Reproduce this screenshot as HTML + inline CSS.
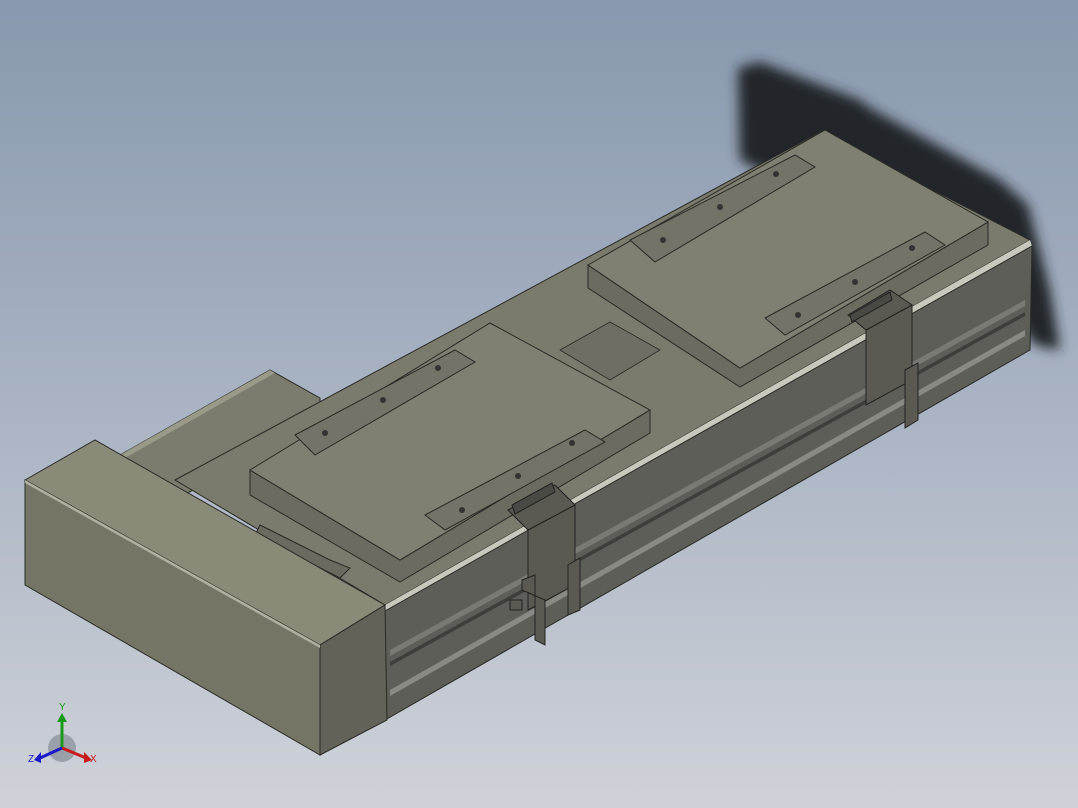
<!DOCTYPE html>
<html><head><meta charset="utf-8"><style>
html,body{margin:0;padding:0;width:1078px;height:808px;overflow:hidden}
body{background:linear-gradient(180deg,#8898ae 0%,#a9b3c3 50%,#cfd2d8 100%)}
svg{position:absolute;left:0;top:0}
</style></head><body>
<svg width="1078" height="808" viewBox="0 0 1078 808">
<defs><filter id="b"><feGaussianBlur stdDeviation="6"/></filter></defs>
<!-- shadow -->
<polygon points="738,68 760,62 860,100 870,108 1000,180 1028,205 1050,290 1060,350 1035,345 1000,300 900,230 800,190 740,160" fill="#23262c" filter="url(#b)"/>
<!-- back plate left -->
<polygon points="120,455 270,370 320,398 320,420 175,500" fill="#7c7c6e" stroke="#2a2a26" stroke-width="1"/>
<polygon points="120,455 270,370 275,373 125,458" fill="#9a9a88"/>
<!-- rail top -->
<polygon points="175,480 820,132 1030,240 385,605" fill="#7b7b6d" stroke="#2a2a26"/>
<polygon points="385,605 1030,240 1032,246 387,611" fill="#c8c8bc"/>
<!-- rail side -->
<polygon points="385,611 1032,246 1030,350 385,720" fill="#5e5e59" stroke="#2a2a26"/>
<polygon points="390,650 1025,300 1025,306 390,656" fill="#7a7a74"/>
<polygon points="390,662 1025,312 1025,316 390,666" fill="#3e3e3b"/>
<polygon points="390,690 1025,330 1025,336 390,696" fill="#8a8a84"/>
<!-- inner trough -->
<polygon points="260,525 330,560 350,568 340,578 255,535" fill="#6a6a5e" stroke="#2a2a26"/>
<polygon points="560,350 610,322 660,350 610,380" fill="#6e6e62" stroke="#2a2a26" stroke-width=".8"/>
<!-- carriage 1 -->
<polygon points="250,470 250,495 400,582 650,433 650,410 400,560" fill="#6b6b60" stroke="#2a2a26"/>
<polygon points="250,470 490,323 650,410 400,560" fill="#808072" stroke="#2a2a26"/>
<polygon points="295,435 455,350 475,362 315,455" fill="#737367" stroke="#2a2a26"/>
<polygon points="425,515 585,430 605,442 445,530" fill="#737367" stroke="#2a2a26"/>
<g fill="#333"><circle cx="325" cy="433" r="3"/><circle cx="383" cy="400" r="3"/><circle cx="438" cy="368" r="3"/><circle cx="462" cy="510" r="3"/><circle cx="518" cy="476" r="3"/><circle cx="572" cy="443" r="3"/></g>
<!-- carriage 2 -->
<polygon points="588,265 588,288 740,387 988,245 988,222 740,368" fill="#6b6b60" stroke="#2a2a26"/>
<polygon points="588,265 825,130 988,222 740,368" fill="#808072" stroke="#2a2a26"/>
<polygon points="630,240 795,155 815,167 655,262" fill="#737367" stroke="#2a2a26"/>
<polygon points="765,318 925,232 945,245 785,335" fill="#737367" stroke="#2a2a26"/>
<g fill="#333"><circle cx="663" cy="240" r="3"/><circle cx="720" cy="207" r="3"/><circle cx="776" cy="174" r="3"/><circle cx="798" cy="315" r="3"/><circle cx="855" cy="282" r="3"/><circle cx="912" cy="248" r="3"/></g>
<!-- clamps -->
<g fill="#5a5a52" stroke="#222">
<polygon points="528,530 575,505 575,585 528,610"/>
<polygon points="508,510 555,485 575,505 528,530"/>
<polygon points="522,580 535,575 535,640 545,645 545,600 522,590"/>
<polygon points="568,565 580,558 580,610 568,615"/>
<polygon points="866,330 912,305 912,380 866,405"/>
<polygon points="848,315 890,290 912,305 866,330"/>
<polygon points="905,370 918,363 918,420 905,428"/>
<rect x="510" y="600" width="12" height="10"/>
</g>
<polygon points="512,505 552,483 555,492 515,514" fill="#4a4a44" stroke="#222"/>
<polygon points="850,315 890,292 892,300 852,322" fill="#4a4a44" stroke="#222"/>
<!-- left end block -->
<polygon points="25,480 95,440 385,605 320,645" fill="#8a8a79" stroke="#2a2a26"/>
<polygon points="25,480 320,645 320,755 25,585" fill="#757566" stroke="#2a2a26"/>
<polygon points="320,645 385,605 387,720 320,755" fill="#626259" stroke="#2a2a26"/>
<polygon points="25,480 320,645 320,648 25,483" fill="#b0b0a0"/>
<!-- triad -->
<circle cx="62" cy="748" r="14" fill="#9aa0a8"/>
<line x1="62" y1="748" x2="62" y2="720" stroke="#1a9a1a" stroke-width="3"/>
<polygon points="57,722 67,722 62,713" fill="#1a9a1a"/>
<line x1="62" y1="748" x2="86" y2="758" stroke="#c81a1a" stroke-width="3"/>
<polygon points="84,752 84,763 92,760" fill="#c81a1a"/>
<line x1="62" y1="748" x2="40" y2="758" stroke="#1a1ac8" stroke-width="3"/>
<polygon points="41,752 41,763 34,760" fill="#1a1ac8"/>
<g font-family="Liberation Sans,sans-serif" font-size="10"><text x="59" y="710" fill="#1a9a1a">Y</text><text x="90" y="762" fill="#c81a1a">X</text><text x="28" y="762" fill="#1a1ac8">Z</text></g>
</svg>
</body></html>
